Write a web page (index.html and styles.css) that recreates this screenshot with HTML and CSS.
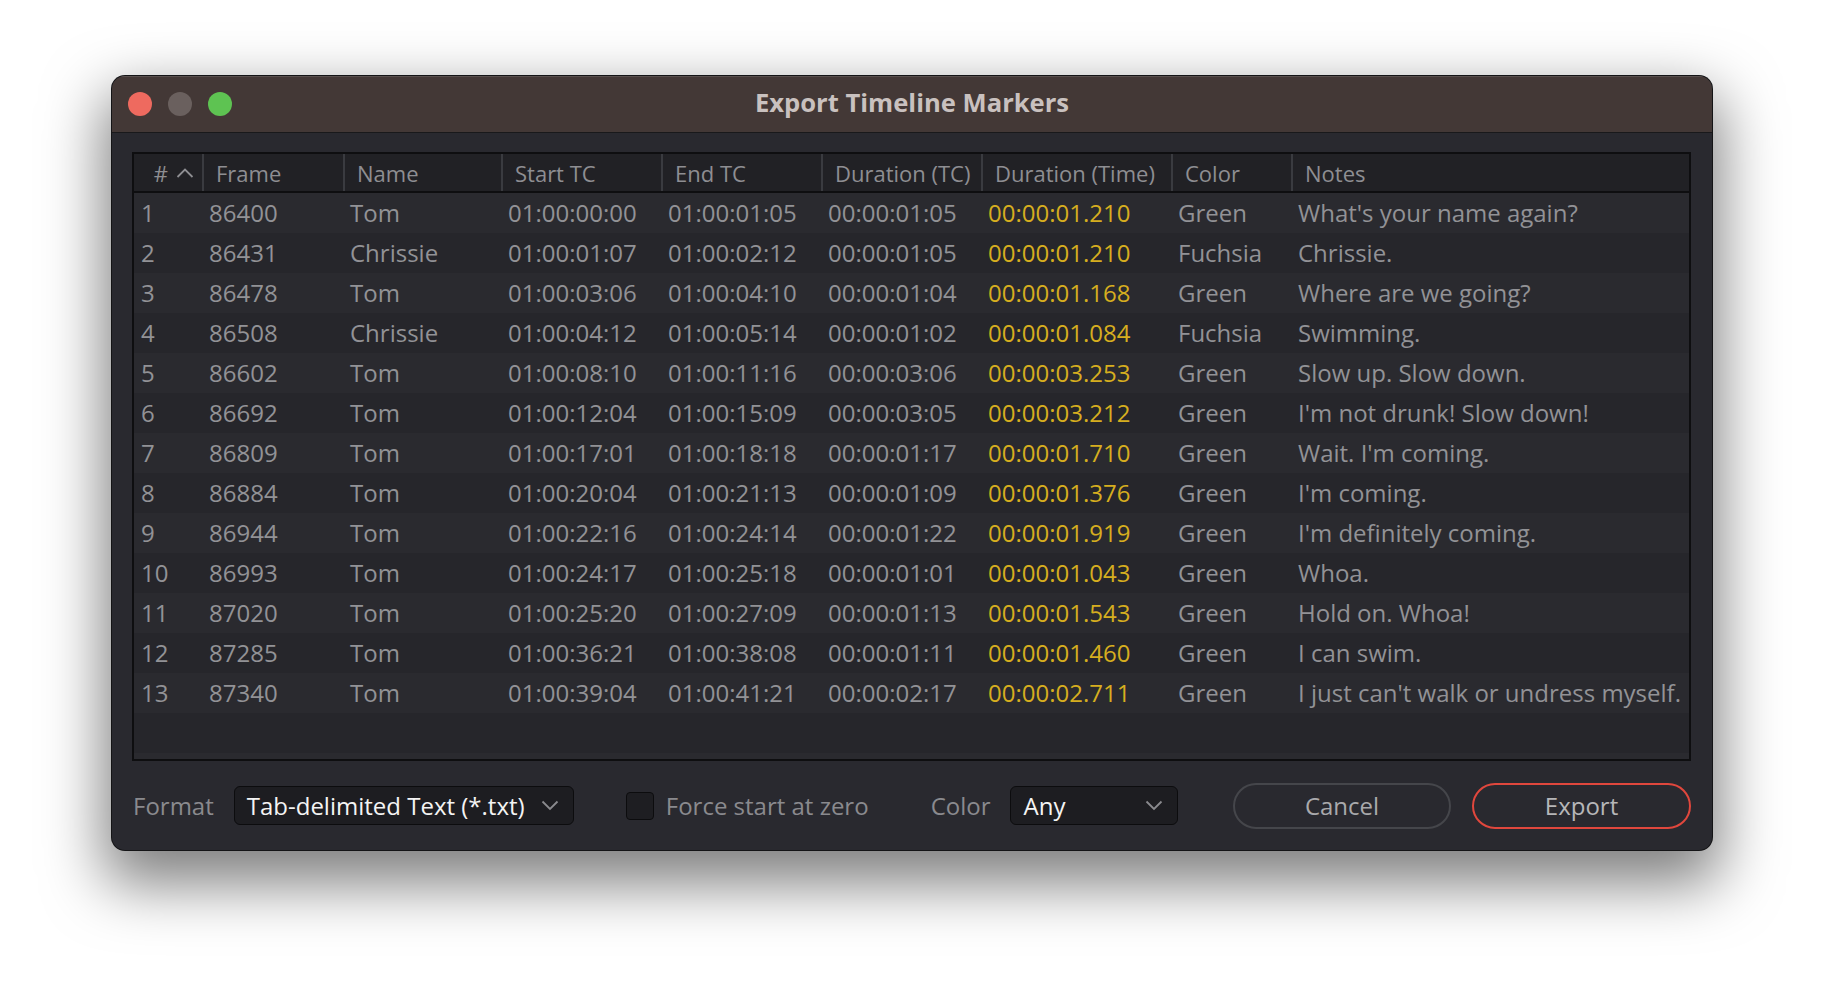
FILE: index.html
```html
<!DOCTYPE html>
<html lang="en">
<head>
<meta charset="utf-8">
<title>Export Timeline Markers</title>
<link rel="stylesheet" href="styles.css">
</head>
<body>
<div class="window">
  <div class="titlebar">
    <div class="lights">
      <span class="light red"></span>
      <span class="light gray"></span>
      <span class="light green"></span>
    </div>
    <div class="title">Export Timeline Markers</div>
    <div></div>
  </div>
  <div class="content">
    <div class="table">
      <div class="thead">
        <div class="th th-num"><span>#</span><svg class="sort" width="18" height="10" viewBox="0 0 18 10"><path d="M1.5 9 L9 1.5 L16.5 9" fill="none" stroke="#8d8d91" stroke-width="1.8"/></svg></div>
        <div class="th">Frame</div>
        <div class="th">Name</div>
        <div class="th">Start TC</div>
        <div class="th">End TC</div>
        <div class="th">Duration (TC)</div>
        <div class="th">Duration (Time)</div>
        <div class="th">Color</div>
        <div class="th">Notes</div>
      </div>
      <div class="tbody">
        <div class="tr"><div>1</div><div>86400</div><div>Tom</div><div>01:00:00:00</div><div>01:00:01:05</div><div>00:00:01:05</div><div class="time">00:00:01.210</div><div>Green</div><div>What's your name again?</div></div>
        <div class="tr"><div>2</div><div>86431</div><div>Chrissie</div><div>01:00:01:07</div><div>01:00:02:12</div><div>00:00:01:05</div><div class="time">00:00:01.210</div><div>Fuchsia</div><div>Chrissie.</div></div>
        <div class="tr"><div>3</div><div>86478</div><div>Tom</div><div>01:00:03:06</div><div>01:00:04:10</div><div>00:00:01:04</div><div class="time">00:00:01.168</div><div>Green</div><div>Where are we going?</div></div>
        <div class="tr"><div>4</div><div>86508</div><div>Chrissie</div><div>01:00:04:12</div><div>01:00:05:14</div><div>00:00:01:02</div><div class="time">00:00:01.084</div><div>Fuchsia</div><div>Swimming.</div></div>
        <div class="tr"><div>5</div><div>86602</div><div>Tom</div><div>01:00:08:10</div><div>01:00:11:16</div><div>00:00:03:06</div><div class="time">00:00:03.253</div><div>Green</div><div>Slow up. Slow down.</div></div>
        <div class="tr"><div>6</div><div>86692</div><div>Tom</div><div>01:00:12:04</div><div>01:00:15:09</div><div>00:00:03:05</div><div class="time">00:00:03.212</div><div>Green</div><div>I'm not drunk! Slow down!</div></div>
        <div class="tr"><div>7</div><div>86809</div><div>Tom</div><div>01:00:17:01</div><div>01:00:18:18</div><div>00:00:01:17</div><div class="time">00:00:01.710</div><div>Green</div><div>Wait. I'm coming.</div></div>
        <div class="tr"><div>8</div><div>86884</div><div>Tom</div><div>01:00:20:04</div><div>01:00:21:13</div><div>00:00:01:09</div><div class="time">00:00:01.376</div><div>Green</div><div>I'm coming.</div></div>
        <div class="tr"><div>9</div><div>86944</div><div>Tom</div><div>01:00:22:16</div><div>01:00:24:14</div><div>00:00:01:22</div><div class="time">00:00:01.919</div><div>Green</div><div>I'm definitely coming.</div></div>
        <div class="tr"><div>10</div><div>86993</div><div>Tom</div><div>01:00:24:17</div><div>01:00:25:18</div><div>00:00:01:01</div><div class="time">00:00:01.043</div><div>Green</div><div>Whoa.</div></div>
        <div class="tr"><div>11</div><div>87020</div><div>Tom</div><div>01:00:25:20</div><div>01:00:27:09</div><div>00:00:01:13</div><div class="time">00:00:01.543</div><div>Green</div><div>Hold on. Whoa!</div></div>
        <div class="tr"><div>12</div><div>87285</div><div>Tom</div><div>01:00:36:21</div><div>01:00:38:08</div><div>00:00:01:11</div><div class="time">00:00:01.460</div><div>Green</div><div>I can swim.</div></div>
        <div class="tr"><div>13</div><div>87340</div><div>Tom</div><div>01:00:39:04</div><div>01:00:41:21</div><div>00:00:02:17</div><div class="time">00:00:02.711</div><div>Green</div><div>I just can't walk or undress myself.</div></div>
      </div>
    </div>
  </div>
  <div class="controls">
    <span class="label">Format</span>
    <div class="select select-format">
      <span class="select-text">Tab-delimited Text (*.txt)</span>
      <svg class="chev" width="18" height="11" viewBox="0 0 18 11"><path d="M1.5 1.5 L9 9 L16.5 1.5" fill="none" stroke="#8a8a8e" stroke-width="1.8"/></svg>
    </div>
    <span class="checkbox"></span>
    <span class="label check-label">Force start at zero</span>
    <span class="label color-label">Color</span>
    <div class="select select-color">
      <span class="select-text">Any</span>
      <svg class="chev" width="18" height="11" viewBox="0 0 18 11"><path d="M1.5 1.5 L9 9 L16.5 1.5" fill="none" stroke="#8a8a8e" stroke-width="1.8"/></svg>
    </div>
    <button class="btn btn-cancel">Cancel</button>
    <button class="btn btn-export">Export</button>
  </div>
</div>
</body>
</html>
```

FILE: styles.css
```css
* { box-sizing: border-box; }

html, body {
  margin: 0;
  background: #ffffff;
}

body {
  min-height: 998px;
  padding: 76px 112px 0 112px;
  font-family: "Open Sans", "Noto Sans", sans-serif;
}

.window {
  width: 1600px;
  height: 774px;
  background: #29292f;
  border-radius: 13px;
  overflow: hidden;
  box-shadow: 0 0 0 1px #141416, 0 26px 60px 8px rgba(0, 0, 0, 0.5);
  display: flex;
  flex-direction: column;
}

.titlebar {
  height: 57px;
  flex: none;
  background: #433836;
  border-bottom: 1px solid #19191b;
  box-shadow: inset 0 1px 0 rgba(255, 255, 255, 0.12);
  display: grid;
  grid-template-columns: 1fr auto 1fr;
  align-items: center;
}

.lights {
  display: flex;
  gap: 16px;
  padding-left: 16px;
}

.light {
  width: 24px;
  height: 24px;
  border-radius: 50%;
  display: block;
}
.light.red { background: #ee6a5f; }
.light.gray { background: #6a605e; }
.light.green { background: #5ec352; }

.title {
  font-weight: 700;
  font-size: 25.6px;
  color: #c9c1bf;
  margin-top: -4px;
}

.content {
  padding: 19px 21px 0 20px;
  flex: none;
}

.table {
  height: 609px;
  border: 2px solid #0e0e10;
  display: flex;
  flex-direction: column;
  background: #26262b;
}

.thead, .tr {
  display: grid;
  grid-template-columns: 68px 141px 158px 160px 160px 160px 190px 120px 1fr;
}

.thead {
  height: 39px;
  flex: none;
  background: #212125;
  border-bottom: 2px solid #0e0e10;
}

.th {
  border-left: 2px solid #3a3b40;
  padding-left: 12px;
  font-size: 22px;
  color: #8e8e92;
  display: flex;
  align-items: center;
  white-space: nowrap;
}

.th-num {
  border-left: none;
  padding: 0 8px 0 0;
  justify-content: flex-end;
  gap: 8px;
}

.tbody {
  flex: 1;
  background: repeating-linear-gradient(to bottom, #2a2a2f 0, #2a2a2f 40px, #26262b 40px, #26262b 80px);
}

.tr {
  height: 40px;
}

.tr > div {
  padding-left: 7px;
  padding-bottom: 2px;
  font-size: 24px;
  color: #929296;
  display: flex;
  align-items: center;
  white-space: nowrap;
}

.tr > div.time {
  color: #d6ae1f;
}

.controls {
  flex: 1;
  display: flex;
  align-items: center;
  padding: 0 21px 0 21px;
}

.label {
  font-size: 24px;
  color: #8a8a8e;
  white-space: nowrap;
}

.select {
  height: 39px;
  background: #1d1d21;
  border: 1.5px solid #0c0c0e;
  border-radius: 6px;
  display: flex;
  align-items: center;
  justify-content: space-between;
  padding: 0 14px 0 12px;
}

.select-text {
  font-size: 24px;
  color: #f4f4f4;
  white-space: nowrap;
}

.select-format {
  width: 340px;
  margin-left: 20px;
}

.select-color {
  width: 168px;
  margin-left: 20px;
}

.checkbox {
  width: 28px;
  height: 28px;
  background: #1e1e22;
  border: 1.5px solid #0c0c0e;
  border-radius: 4px;
  margin-left: 52px;
  display: block;
}

.check-label {
  margin-left: 12px;
}

.color-label {
  margin-left: 62px;
}

.btn {
  height: 46px;
  border-radius: 23px;
  background: transparent;
  font-family: "Open Sans", "Noto Sans", sans-serif;
  font-size: 24px;
  color: #a9a9ac;
  padding: 0;
}

.btn-cancel {
  width: 218px;
  margin-left: auto;
  border: 2px solid #45464b;
}

.btn-export {
  width: 219px;
  margin-left: 21px;
  border: 2px solid #e0473d;
  color: #b6b6b8;
}
```
